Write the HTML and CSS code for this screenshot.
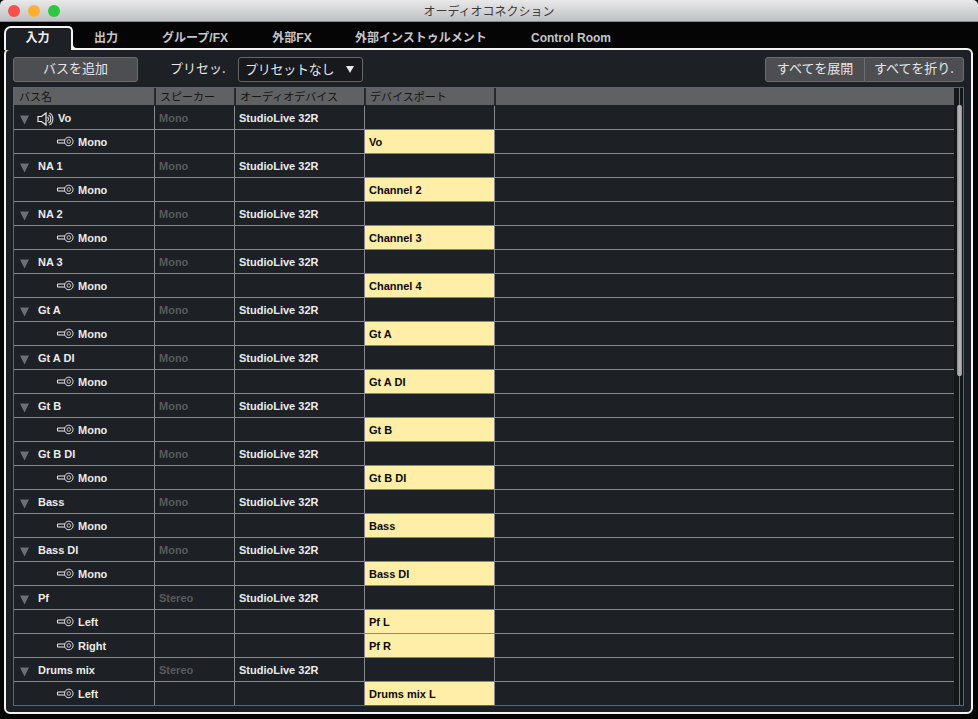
FILE: index.html
```html
<!DOCTYPE html>
<html lang="ja">
<head>
<meta charset="utf-8">
<title>オーディオコネクション</title>
<link rel="stylesheet" href="styles.css">
</head>
<body>
<svg class="defs" width="0" height="0">
  <symbol id="jack" viewBox="0 0 17 11">
    <path d="M0.5 4h7.5M0.5 7h7.5M0.5 4v3" fill="none" stroke="#f0f0f0" stroke-width="1"/>
    <circle cx="11.8" cy="5.5" r="4.3" fill="#1d2024" stroke="#e0e0e0" stroke-width="1"/>
    <circle cx="11.8" cy="5.5" r="1.8" fill="none" stroke="#c8c8c8" stroke-width="1"/>
  </symbol>
  <symbol id="tri" viewBox="0 0 9 10">
    <path d="M0 0.5h9L4.5 9.5z" fill="#6e6f70"/>
  </symbol>
</svg>
<div class="window">
  <header class="titlebar">
    <div class="lights"><span class="light red"></span><span class="light amber"></span><span class="light green"></span></div>
    <div class="title">オーディオコネクション</div>
  </header>
  <nav class="tabs">
    <div class="tab active w1">入力</div>
    <div class="tab w2">出力</div>
    <div class="tab w3">グループ/FX</div>
    <div class="tab w4">外部FX</div>
    <div class="tab w5">外部インストゥルメント</div>
    <div class="tab w6">Control Room</div>
  </nav>
  <main class="panel">
    <div class="toolbar">
      <button class="btn add">バスを追加</button>
      <span class="preset-label">プリセッ.</span>
      <div class="select"><span class="select-text">プリセットなし</span><span class="arrow"></span></div>
      <div class="split">
        <button class="btn left">すべてを展開</button>
        <button class="btn right">すべてを折り.</button>
      </div>
    </div>
    <div class="frame">
      <div class="list">
        <div class="head"><div>バス名</div><div>スピーカー</div><div>オーディオデバイス</div><div>デバイスポート</div><div></div></div>

        <div class="row"><div class="name"><svg class="tri"><use href="#tri"/></svg><svg class="spk" viewBox="0 0 18 14"><path d="M1 4.5h3.5L9 1v12L4.5 9.5H1z" fill="none" stroke="#ececec" stroke-width="1.2"/><path d="M10.5 5a2.5 2.5 0 0 1 0 4M11.5 3a4.5 4.5 0 0 1 0 8M12.5 1a7 7 0 0 1 0 12" fill="none" stroke="#dcdcdc" stroke-width="1.1"/></svg><span class="spk-label">Vo</span></div><div class="dim">Mono</div><div>StudioLive 32R</div><div></div><div></div></div>
        <div class="row"><div class="name child"><svg class="jack"><use href="#jack"/></svg>Mono</div><div></div><div></div><div class="port">Vo</div><div></div></div>

        <div class="row"><div class="name"><svg class="tri"><use href="#tri"/></svg>NA 1</div><div class="dim">Mono</div><div>StudioLive 32R</div><div></div><div></div></div>
        <div class="row"><div class="name child"><svg class="jack"><use href="#jack"/></svg>Mono</div><div></div><div></div><div class="port">Channel 2</div><div></div></div>

        <div class="row"><div class="name"><svg class="tri"><use href="#tri"/></svg>NA 2</div><div class="dim">Mono</div><div>StudioLive 32R</div><div></div><div></div></div>
        <div class="row"><div class="name child"><svg class="jack"><use href="#jack"/></svg>Mono</div><div></div><div></div><div class="port">Channel 3</div><div></div></div>

        <div class="row"><div class="name"><svg class="tri"><use href="#tri"/></svg>NA 3</div><div class="dim">Mono</div><div>StudioLive 32R</div><div></div><div></div></div>
        <div class="row"><div class="name child"><svg class="jack"><use href="#jack"/></svg>Mono</div><div></div><div></div><div class="port">Channel 4</div><div></div></div>

        <div class="row"><div class="name"><svg class="tri"><use href="#tri"/></svg>Gt A</div><div class="dim">Mono</div><div>StudioLive 32R</div><div></div><div></div></div>
        <div class="row"><div class="name child"><svg class="jack"><use href="#jack"/></svg>Mono</div><div></div><div></div><div class="port">Gt A</div><div></div></div>

        <div class="row"><div class="name"><svg class="tri"><use href="#tri"/></svg>Gt A DI</div><div class="dim">Mono</div><div>StudioLive 32R</div><div></div><div></div></div>
        <div class="row"><div class="name child"><svg class="jack"><use href="#jack"/></svg>Mono</div><div></div><div></div><div class="port">Gt A DI</div><div></div></div>

        <div class="row"><div class="name"><svg class="tri"><use href="#tri"/></svg>Gt B</div><div class="dim">Mono</div><div>StudioLive 32R</div><div></div><div></div></div>
        <div class="row"><div class="name child"><svg class="jack"><use href="#jack"/></svg>Mono</div><div></div><div></div><div class="port">Gt B</div><div></div></div>

        <div class="row"><div class="name"><svg class="tri"><use href="#tri"/></svg>Gt B DI</div><div class="dim">Mono</div><div>StudioLive 32R</div><div></div><div></div></div>
        <div class="row"><div class="name child"><svg class="jack"><use href="#jack"/></svg>Mono</div><div></div><div></div><div class="port">Gt B DI</div><div></div></div>

        <div class="row"><div class="name"><svg class="tri"><use href="#tri"/></svg>Bass</div><div class="dim">Mono</div><div>StudioLive 32R</div><div></div><div></div></div>
        <div class="row"><div class="name child"><svg class="jack"><use href="#jack"/></svg>Mono</div><div></div><div></div><div class="port">Bass</div><div></div></div>

        <div class="row"><div class="name"><svg class="tri"><use href="#tri"/></svg>Bass DI</div><div class="dim">Mono</div><div>StudioLive 32R</div><div></div><div></div></div>
        <div class="row"><div class="name child"><svg class="jack"><use href="#jack"/></svg>Mono</div><div></div><div></div><div class="port">Bass DI</div><div></div></div>

        <div class="row"><div class="name"><svg class="tri"><use href="#tri"/></svg>Pf</div><div class="dim">Stereo</div><div>StudioLive 32R</div><div></div><div></div></div>
        <div class="row"><div class="name child"><svg class="jack"><use href="#jack"/></svg>Left</div><div></div><div></div><div class="port">Pf L</div><div></div></div>
        <div class="row"><div class="name child"><svg class="jack"><use href="#jack"/></svg>Right</div><div></div><div></div><div class="port">Pf R</div><div></div></div>

        <div class="row"><div class="name"><svg class="tri"><use href="#tri"/></svg>Drums mix</div><div class="dim">Stereo</div><div>StudioLive 32R</div><div></div><div></div></div>
        <div class="row"><div class="name child"><svg class="jack"><use href="#jack"/></svg>Left</div><div></div><div></div><div class="port">Drums mix L</div><div></div></div>
      </div>
      <div class="scroll"><div class="thumb"></div></div>
    </div>
  </main>
</div>
</body>
</html>
```

FILE: styles.css
```css
* { box-sizing: border-box; }

html, body {
  margin: 0;
  height: 719px;
  overflow: hidden;
  background: #050505;
}

body {
  font-family: "Liberation Sans", "Noto Sans CJK JP", sans-serif;
}

.defs { display: block; height: 0; }

.window {
  width: 978px;
  height: 719px;
  display: flex;
  flex-direction: column;
  background: #050505;
  border-radius: 5px 5px 0 0;
  overflow: hidden;
}

/* Title bar */
.titlebar {
  height: 22px;
  flex: none;
  display: flex;
  align-items: center;
  position: relative;
  background: linear-gradient(#e9e9ea, #bfc0c3);
  border-bottom: 1px solid #8a8b8d;
}

.lights {
  display: flex;
  gap: 8px;
  padding-left: 8px;
}

.light {
  width: 12px;
  height: 12px;
  border-radius: 50%;
}
.red { background: #fb4f4b; }
.amber { background: #fdb02f; }
.green { background: #2fc740; }

.title {
  position: absolute;
  left: 0;
  right: 0;
  top: 3px;
  text-align: center;
  font-size: 12px;
  line-height: 16px;
  color: #3c3c3c;
  font-family: "Noto Sans CJK JP", sans-serif;
}

/* Tabs */
.tabs {
  height: 26px;
  flex: none;
  display: flex;
  padding-left: 5px;
  background: #050505;
  position: relative;
  z-index: 2;
}

.tab {
  height: 26px;
  font-family: "Liberation Sans", "Noto Sans CJK JP", sans-serif;
  font-size: 12px;
  font-weight: 700;
  line-height: 33px;
  text-align: center;
  color: #c6c6c6;
}
.w1 { width: 68px; }
.w2 { width: 66px; }
.w3 { width: 112px; margin-right: 2px; }
.w4 { width: 78px; }
.w5 { width: 180px; }
.w6 { width: 120px; }

.tab.active {
  height: 24px;
  margin-top: 4px;
  margin-left: -1px;
  width: 69px;
  border: 2px solid #f4f4f4;
  border-bottom: none;
  border-radius: 7px 5px 0 0;
  background: #1d2024;
  color: #f0f0f0;
  line-height: 20px;
  padding-right: 2px;
  position: relative;
}

.tab.active::after {
  content: "";
  position: absolute;
  left: 100%;
  bottom: 0;
  width: 6px;
  height: 6px;
  border-left: 2px solid #f4f4f4;
  border-bottom: 2px solid #f4f4f4;
  border-bottom-left-radius: 6px;
  background: #050505;
}

/* Panel */
.panel {
  margin: 0 5px 5px 4px;
  flex: 1;
  min-height: 0;
  display: flex;
  flex-direction: column;
  gap: 5px;
  padding: 7px 7px 6px 7px;
  border: 2px solid #f4f4f4;
  border-radius: 6px;
  background: #1d2024;
}

.toolbar {
  height: 25px;
  flex: none;
  display: flex;
  align-items: stretch;
  color: #e8e8e8;
  font-family: "Noto Sans CJK JP", sans-serif;
  font-size: 13px;
}

.btn {
  font: inherit;
  color: #e6e6e6;
  background: #4c4e51;
  border: 1px solid #6b6d70;
  border-radius: 3px;
  padding: 0 0 3px;
  line-height: 20px;
}

.add { width: 125px; }

.preset-label {
  margin-left: 32px;
  width: 55px;
  line-height: 22px;
  white-space: nowrap;
}

.select {
  margin-left: 13px;
  width: 125px;
  display: flex;
  justify-content: space-between;
  align-items: center;
  padding: 0 8px 0 6px;
  line-height: 21px;
  background: #17191c;
  border: 1px solid #64666a;
  border-radius: 3px;
}

.select-text {
  letter-spacing: -0.25px;
  margin-top: -2px;
}

.arrow {
  width: 0;
  height: 0;
  border-left: 4px solid transparent;
  border-right: 4px solid transparent;
  border-top: 7px solid #e8e8e8;
}

.split {
  margin-left: auto;
  display: flex;
}

.split .left {
  width: 100px;
  border-radius: 3px 0 0 3px;
}

.split .right {
  width: 100px;
  margin-left: -1px;
  border-radius: 0 3px 3px 0;
}

/* List */
.frame {
  height: 619px;
  flex: none;
  display: flex;
  border: 1px solid #56677a;
  overflow: hidden;
}

.list {
  flex: 1;
  min-width: 0;
  font-size: 11px;
  font-weight: 700;
  color: #ececec;
}

.head,
.row {
  display: grid;
  grid-template-columns: 141px 80px 130px 130px 1fr;
}

.head {
  grid-template-columns: 142px 80px 130px 130px 1fr;
  height: 17px;
  margin-bottom: 1px;
  background: #606163;
  color: #141414;
  font-family: "Noto Sans CJK JP", sans-serif;
  font-weight: 400;
  line-height: 16px;
}

.head > div {
  padding-left: 4px;
  border-right: 2px solid #26292d;
}
.head > div:first-child { padding-left: 5px; }
.head > div:last-child { border-right: none; }

.row {
  height: 24px;
  grid-template-rows: 23px;
  line-height: 23px;
  border-bottom: 1px solid #88898a;
}

.row > div {
  padding-left: 4px;
  padding-top: 1px;
  border-right: 1px solid #88898a;
}
.row > div:last-child { border-right: none; }

.row .name {
  display: flex;
  align-items: center;
  padding-left: 6px;
  padding-top: 2px;
}

.row .name.child { padding-left: 43px; }

.tri {
  width: 9px;
  height: 10px;
  margin-right: 9px;
  margin-top: 2px;
  flex: none;
}

.spk {
  width: 18px;
  height: 14px;
  margin-right: 3px;
  margin-left: -1px;
  flex: none;
}

.jack {
  width: 17px;
  height: 11px;
  margin-right: 4px;
  margin-bottom: 2px;
  flex: none;
}

.row .dim { color: #5a5b5d; }

.row .port {
  background: #ffeea8;
  color: #0a0a0a;
}

/* Scrollbar */
.scroll {
  width: 9px;
  flex: none;
  padding: 17px 1px 0 3px;
  background: linear-gradient(90deg, #15181b 0 5px, #6d6e70 5px 6px, #15181b 6px);
}

.thumb {
  height: 271px;
  border-radius: 2px;
  background: linear-gradient(90deg, #8f9092, #bcbcbe 60%, #8a8b8d);
}
```
